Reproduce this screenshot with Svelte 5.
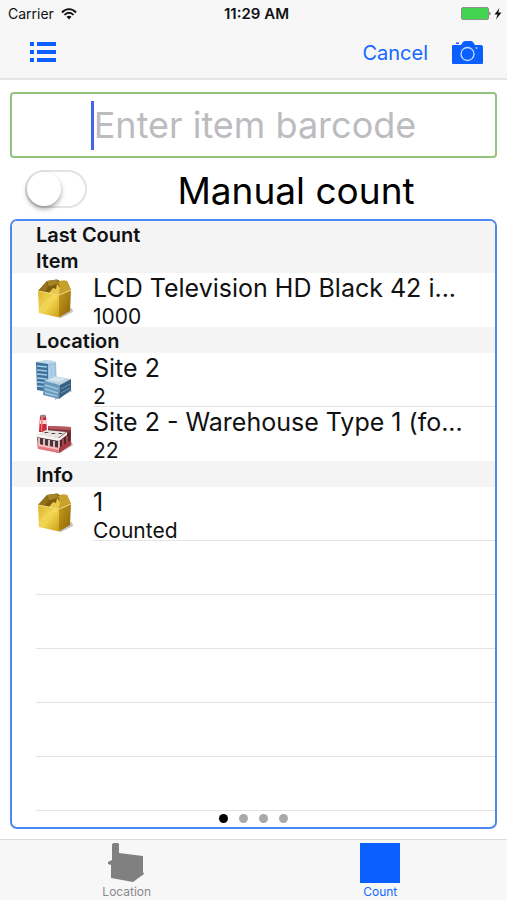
<script lang="ts">
type IconName = 'box' | 'office' | 'factory';

interface Row {
  icon: IconName;
  title: string;
  detail: string;
}

interface Section {
  header: string;
  rows: Row[];
}

const sections: Section[] = [
  { header: 'Last Count', rows: [] },
  {
    header: 'Item',
    rows: [{ icon: 'box', title: 'LCD Television HD Black 42 i...', detail: '1000' }],
  },
  {
    header: 'Location',
    rows: [
      { icon: 'office', title: 'Site 2', detail: '2' },
      { icon: 'factory', title: 'Site 2 - Warehouse Type 1 (fo...', detail: '22' },
    ],
  },
  {
    header: 'Info',
    rows: [{ icon: 'box', title: '1', detail: 'Counted' }],
  },
];

const emptyRows = [1, 2, 3, 4, 5];
const pages = [1, 2, 3, 4];

let barcode = $state('');
let manualCount = $state(false);
let currentPage = $state(1);
let activeTab = $state('count');
</script>

{#snippet rowIcon(name: IconName)}
  {#if name === 'box'}
    <svg class="row-icon" viewBox="0 0 40 42" aria-hidden="true">
      <defs>
        <linearGradient id="box-front" x1="0" y1="0" x2="1" y2="1">
          <stop offset="0" stop-color="#dcb52c" />
          <stop offset="0.5" stop-color="#f2d653" />
          <stop offset="1" stop-color="#cf9f10" />
        </linearGradient>
        <linearGradient id="box-side" x1="0" y1="0" x2="1" y2="1">
          <stop offset="0" stop-color="#c79b22" />
          <stop offset="1" stop-color="#8d6505" />
        </linearGradient>
      </defs>
      <path d="M23 40l14-7-1-4-6 1z" fill="#c4c4c0" />
      <path d="M11 2l10-1.500 3 1.500 7 0 4 9-12 5L2 12z" fill="#7d5c10" />
      <path d="M11 2l10-1.500 1 4-9 3z" fill="#a88428" />
      <path d="M2 12l9-10 1 6-3 5z" fill="#94701a" />
      <path d="M13 14l4-5 3 1 1-5 4 5-2 6z" fill="#e8c84a" />
      <path d="M22 3q5-3 9-1l4 9-12 5 1-7z" fill="#c9a02a" />
      <path d="M2 12l21 4v22.500L3 34z" fill="url(#box-front)" />
      <path d="M23 16l12-5-1 21-11 6.500z" fill="url(#box-side)" />
      <path d="M2 12l21 4 12-5" fill="none" stroke="#f1dc7e" />
      <path d="M4 31C8 22 14 18 21 18" fill="none" stroke="#fae98c" opacity="0.5" />
    </svg>
  {:else if name === 'office'}
    <svg class="row-icon" viewBox="0 0 40 42" aria-hidden="true">
      <path d="M19 41l17-9-3-4-14 8z" fill="#b5b5b5" />
      <path d="M0 3l12 1v29L1 31z" fill="#3f719d" />
      <path d="M12 4l8-1 1 27-9 3z" fill="#9dc3df" />
      <path d="M0 3l9-2q8 0 11 2l-8 2z" fill="#bdd9eb" />
      <path d="M1 7l10 1M1 11l10 1M1 15l10 1M1 19l10 1M1 23l10 1M1 27l10 1" stroke="#a5cae3" stroke-width="1.500" />
      <path d="M14 7v24M17 6v24" stroke="#c4dfee" />
      <path d="M8 22l10-5 17 3-11 6z" fill="#bad3e3" />
      <path d="M12 21l7-3 11 2-7 3z" fill="#d6e6ef" />
      <path d="M8 22l16 4-1 14-16-4z" fill="#6799be" />
      <path d="M24 26l11-6v11l-12 9z" fill="#365f80" />
      <path d="M9 26l13 4M9 30l13 4M9 34l12 3" stroke="#9fc5dd" stroke-width="1.500" />
      <path d="M25 30l9-5M25 34l9-5" stroke="#6f98b5" />
    </svg>
  {:else}
    <svg class="row-icon" viewBox="0 0 40 42" aria-hidden="true">
      <path d="M24 40l13-8-2-4-13 8z" fill="#bdb3b3" />
      <path d="M12 13l23 1v16l-11 8-12-4z" fill="#7b343a" />
      <path d="M12 13l23 1v3l-22-1z" fill="#b7575e" />
      <path d="M4 3h6l1 16H3z" fill="#cc2736" />
      <path d="M4 7h6l1 4H4z" fill="#f3d9da" />
      <path d="M5 4h2l-1 14H5z" fill="#ef7d84" />
      <ellipse cx="7" cy="3" rx="3" ry="1.500" fill="#a08488" />
      <path d="M0 22l10-5 20 2-8 6z" fill="#e6e3e0" />
      <path d="M1 23l22 3v14L2 35z" fill="#4d3238" />
      <path d="M24 26l10-7v12l-11 9z" fill="#5a232a" />
      <path d="M0 21l23 4 8-6v3l-8 6-23-4z" fill="#f6f3f1" />
      <path d="M3 25v8M8 26v8M13 27v8M18 28v8M23 28v8" stroke="#d9bcbc" stroke-width="2" />
      <path d="M27 26v7M31 23v7" stroke="#9c4b52" stroke-width="2" />
      <path d="M1 31l22 4v5L2 36z" fill="#e3797e" />
      <path d="M2 31l21 4v2L2 33z" fill="#f7bdbd" />
      <path d="M23 35l12-8v5l-12 8z" fill="#a93c46" />
      <path d="M9 19l4 0-2 1-3 0zM16 20l4 0-2 1-3 0zM23 20l4 0-2 1-3 0z" fill="#4a3f42" />
    </svg>
  {/if}
{/snippet}

<div class="screen">
  <header>
    <div class="status-bar">
      <div class="carrier">
        <span>Carrier</span>
        <svg class="wifi" viewBox="0 0 16 12" aria-hidden="true">
          <path d="M1 4.500C5 0 11 0 15 4.500M3.500 7C6 4 10 4 12.500 7" fill="none" stroke="#111" stroke-width="1.900" />
          <path d="M5.500 8.800C7 7.300 9 7.300 10.500 8.800L8 11.500z" fill="#111" />
        </svg>
      </div>
      <time>11:29 AM</time>
      <div class="battery">
        <svg viewBox="0 0 42 14" aria-hidden="true">
          <rect x="0.500" y="0.500" width="27" height="12" rx="1.500" fill="#43d551" stroke="#8b938b" />
          <path d="M28.500 4.500q2 2 0 4z" fill="#333" />
          <path d="M38.500 1l-5 6.500h3l-1.500 5 5.500-7h-3.200z" fill="#111" />
        </svg>
      </div>
    </div>
    <nav class="nav-bar">
      <button class="icon-button" aria-label="Menu">
        <svg class="menu-icon" viewBox="0 0 26 21" aria-hidden="true">
          <path d="M0 0h4v4H0zM7 0h19v4H7zM0 8h4v4H0zM7 8h19v4H7zM0 16h4v4H0zM7 16h19v4H7z" />
        </svg>
      </button>
      <div class="nav-actions">
        <button class="cancel">Cancel</button>
        <button class="icon-button" aria-label="Scan with camera">
          <svg class="camera-icon" viewBox="0 0 31 24" aria-hidden="true">
            <path d="M1 4h8l2-3q1-1 2-1h6q1 0 2 1l2 3h6q2 0 2 2v16q0 1-1 1H1q-1 0-1-1V5q0-1 1-1z" />
            <path d="M4 1.500h3v1.500H4z" />
            <circle cx="15.500" cy="13" r="6.500" fill="none" stroke="#c5dcff" stroke-width="1.300" />
            <circle cx="24.500" cy="7" r="1" fill="#9fc6ff" />
          </svg>
        </button>
      </div>
    </nav>
  </header>

  <main>
    <label class="barcode-field">
      <span class="caret"></span>
      <input type="text" bind:value={barcode} placeholder="Enter item barcode" aria-label="Item barcode" />
    </label>

    <div class="manual-row">
      <input id="manual-count" class="switch" type="checkbox" role="switch" bind:checked={manualCount} />
      <label for="manual-count">Manual count</label>
    </div>

    <section class="panel">
      {#each sections as section (section.header)}
        <h2>{section.header}</h2>
        {#if section.rows.length}
          <ul>
            {#each section.rows as row}
              <li class="row">
                {@render rowIcon(row.icon)}
                <div class="row-text">
                  <div class="row-title">{row.title}</div>
                  <div class="row-detail">{row.detail}</div>
                </div>
              </li>
            {/each}
          </ul>
        {/if}
      {/each}
      {#each emptyRows as n (n)}
        <div class="empty-row"></div>
      {/each}
      <div class="pager">
        {#each pages as page (page)}
          <button
            class="dot"
            class:current={page === currentPage}
            aria-label={`Page ${page}`}
            onclick={() => (currentPage = page)}
          ></button>
        {/each}
      </div>
    </section>
  </main>

  <footer class="tab-bar">
    <button class="tab" class:active={activeTab === 'location'} onclick={() => (activeTab = 'location')}>
      <svg class="tab-icon" viewBox="0 0 40 40" aria-hidden="true">
        <path d="M5 1l2-1h4l1 1v9l24 3v16l1 2-11 8L4 35V22l-3-1v-2l4-2z" />
      </svg>
      <span>Location</span>
    </button>
    <button class="tab" class:active={activeTab === 'count'} onclick={() => (activeTab = 'count')}>
      <svg class="tab-icon" viewBox="0 0 40 40" aria-hidden="true">
        <path d="M0 0h40v40H0z" />
      </svg>
      <span>Count</span>
    </button>
  </footer>
</div>

<style>
  :global(body) {
    background: #fff;
  }

  .screen {
    display: flex;
    flex-direction: column;
    min-height: 100vh;
    font-family: Inter, 'Liberation Sans', sans-serif;
    color: #111;
  }

  button,
  input {
    font-family: inherit;
    border: none;
    background: none;
    padding: 0;
    margin: 0;
  }

  button {
    cursor: pointer;
  }

  svg {
    display: block;
  }

  header {
    background: #f7f7f7;
    border-bottom: 2px solid #e5e5e5;
  }

  .status-bar {
    display: grid;
    grid-template-columns: 1fr auto 1fr;
    align-items: center;
    height: 27px;
    padding: 0 4px 0 8px;
    font-size: 14px;
  }

  .carrier {
    display: flex;
    align-items: center;
    gap: 7px;
  }

  .wifi {
    width: 16px;
    height: 12px;
  }

  time {
    padding-left: 2px;
    font-size: 15px;
    font-weight: 600;
  }

  .battery {
    display: flex;
    justify-content: flex-end;
  }

  .battery svg {
    width: 42px;
    height: 14px;
  }

  .nav-bar {
    display: flex;
    align-items: center;
    justify-content: space-between;
    height: 51px;
    padding: 0 24px 0 30px;
  }

  .nav-actions {
    display: flex;
    align-items: center;
    gap: 24px;
  }

  .icon-button {
    fill: #0b5fff;
  }

  .menu-icon {
    width: 26px;
    height: 21px;
  }

  .camera-icon {
    width: 31px;
    height: 24px;
  }

  .cancel {
    color: #1468ff;
    font-size: 20px;
  }

  main {
    flex: 1;
    display: flex;
    flex-direction: column;
    padding: 12px 10px 10px;
  }

  .barcode-field {
    display: flex;
    align-items: center;
    justify-content: center;
    height: 62px;
    border: 2px solid #93c47d;
    border-radius: 4px;
  }

  .caret {
    width: 3px;
    height: 49px;
    background: #4263eb;
  }

  .barcode-field input {
    field-sizing: content;
    font-size: 36px;
    outline: none;
    caret-color: transparent;
  }

  .barcode-field input::placeholder {
    color: #bcbcc0;
  }

  .manual-row {
    display: flex;
    align-items: center;
    height: 61px;
    padding-left: 15px;
  }

  .manual-row label {
    flex: 1;
    text-align: center;
    padding: 4px 0 0 8px;
    font-size: 37px;
    color: #000;
  }

  .switch {
    appearance: none;
    display: flex;
    width: 62px;
    height: 38px;
    border: 2px solid #e2e2e2;
    border-radius: 19px;
    cursor: pointer;
  }

  .switch::before {
    content: '';
    width: 34px;
    height: 34px;
    border-radius: 50%;
    background: #fff;
    box-shadow: 0 3px 5px rgba(0, 0, 0, 0.35);
  }

  .switch:checked {
    justify-content: flex-end;
    background: #43d551;
  }

  .panel {
    flex: 1;
    border: 2px solid #4d88f0;
    border-radius: 7px;
    overflow: hidden;
  }

  h2 {
    margin: 0;
    padding: 2px 0 0 24px;
    background: #f4f4f4;
    font-size: 20px;
    line-height: 24px;
    font-weight: 600;
  }

  ul {
    list-style: none;
    margin: 0;
    padding: 0;
  }

  .row {
    display: flex;
    align-items: center;
    gap: 17px;
    height: 54px;
    padding-left: 24px;
  }

  .row-icon {
    flex-shrink: 0;
    width: 40px;
    height: 42px;
  }

  .row-text {
    flex: 1;
    min-width: 0;
    height: 53px;
    border-bottom: 1px solid #e4e4e4;
  }

  /* a section header takes the place of the separator */
  ul:not(:last-of-type) .row:last-child .row-text {
    border-bottom-color: transparent;
  }

  .row-title {
    overflow: hidden;
    white-space: nowrap;
    font-size: 25px;
    line-height: 30px;
  }

  .row-detail {
    font-size: 21px;
    line-height: 27px;
  }

  .empty-row {
    height: 53px;
    margin-left: 24px;
    border-bottom: 1px solid #e4e4e4;
  }

  .pager {
    display: flex;
    align-items: center;
    justify-content: center;
    gap: 11px;
    height: 14px;
  }

  .dot {
    width: 9px;
    height: 9px;
    border-radius: 50%;
    background: #a9a9a9;
  }

  .dot.current {
    background: #000;
  }

  .tab-bar {
    display: flex;
    background: #f7f7f7;
    border-top: 1px solid #dcdcdc;
  }

  .tab {
    flex: 1;
    display: flex;
    flex-direction: column;
    align-items: center;
    gap: 1px;
    padding: 3px 0 1px;
    color: #8a8a8a;
    fill: #808080;
    font-size: 12px;
    line-height: 15px;
  }

  .tab.active {
    color: #1468ff;
    fill: #0b5fff;
  }

  .tab-icon {
    width: 40px;
    height: 40px;
  }
</style>
